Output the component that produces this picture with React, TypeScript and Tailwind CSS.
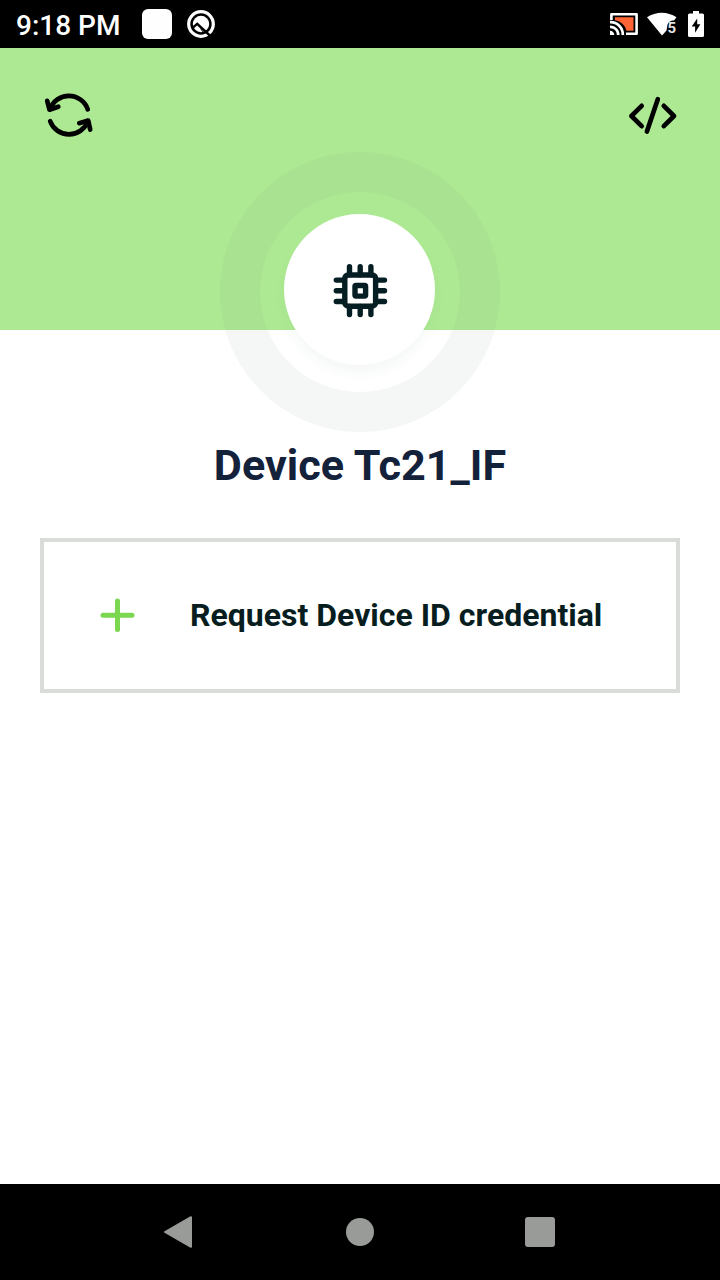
import React from "react";

function StatusBar() {
  return (
    <header className="flex h-12 shrink-0 items-center justify-between bg-black pl-4 pr-[15px] text-white">
      <div className="flex items-center">
        <span className="w-[126px] whitespace-nowrap pt-[3px] text-[28px] font-medium leading-8">9:18 PM</span>
        <span className="size-[30px] rounded-[6px] bg-[#fdfefd]" />
        <svg className="ml-[14px] size-[30px]" viewBox="0 0 30 30" fill="none">
          <circle cx="15" cy="15" r="12.3" stroke="#fff" strokeWidth="3.2" />
          <circle cx="15" cy="15" r="8.2" fill="#fff" />
          <path d="M6.500 18.800l4.700-3.900L26 28.500" stroke="#000" strokeWidth="2.4" />
          <path d="M14.500 19.500l3 4" stroke="#000" strokeWidth="1" />
        </svg>
      </div>
      <div className="flex items-center">
        <svg className="h-[24px] w-[30px]" viewBox="0 0 30 24" fill="none">
          <path d="M2.400 8V2.300h25.200v19.400H17" stroke="#fff" strokeWidth="2.600" strokeLinejoin="round" />
          <path d="M6 5.200h18.500v13.600h-7C16 13 12 9 6 8.200z" fill="#ff6434" />
          <path d="M1 10.200A12.300 12.300 0 0 1 13.800 23M1 15a7.600 7.600 0 0 1 8.200 8" stroke="#fff" strokeWidth="2.700" />
          <path d="M1 18.800a4.300 4.300 0 0 1 4.300 4.300H1z" fill="#fff" />
        </svg>
        <div className="relative ml-[8px] h-[24px] w-[32px]">
          <svg className="size-full" viewBox="0 0 32 24">
            <path d="M0 5.300C9-.9 20.500-.9 29.500 5.300L27 8.500C23.500 8.500 20.500 10.500 20.300 14L19.500 18.500l-4.500 5z" fill="#fff" />
          </svg>
          <span className="absolute left-[20.500px] top-[8px] text-[15px] font-bold leading-[16px] text-[#e4e4e4]">5</span>
        </div>
        <svg className="ml-[8px] h-[26px] w-[18px]" viewBox="0 0 18 26">
          <path d="M6 0h6v2.500h3.500a1.500 1.500 0 0 1 1.500 1.500v20.500a1.500 1.500 0 0 1-1.500 1.500h-13A1.500 1.500 0 0 1 1 24.500V4a1.500 1.500 0 0 1 1.500-1.500H6z" fill="#fff" />
          <path d="M10.200 7.500L4.700 15.600h3.400v6.200l5.300-8.600h-3.200z" fill="#000" />
        </svg>
      </div>
    </header>
  );
}

function DeviceBadge() {
  return (
    <div className="absolute left-[220px] top-[104px] size-[280px] rounded-full border-[40px] border-[#829687]/8">
      <div className="ml-[24.400px] mt-[22px] flex size-[151px] items-center justify-center rounded-full bg-[#fefffe] shadow-[0_8px_14px_-2px_rgba(50,70,100,0.05)]">
        <svg className="size-[80px]" viewBox="0 0 80 80" fill="none" stroke="#051e23" strokeWidth="5.400" strokeLinecap="round">
          <rect x="24.800" y="25" width="30.800" height="31.200" rx="3.500" />
          <rect x="35" y="35.500" width="10.600" height="10.600" rx="1" />
          <path d="M29.500 16.700v8M40.200 16.700v8M50.900 16.700v8M29.500 56.500v8M40.200 56.500v8M50.900 56.500v8M16.300 30.100h8M16.300 40.800h8M16.300 51.500h8M56.500 30.100h8M56.500 40.800h8M56.500 51.500h8" />
        </svg>
      </div>
    </div>
  );
}

export default function App() {
  return (
    <div className="flex h-[1280px] w-[720px] flex-col overflow-hidden bg-[#fefffe] font-['Roboto',sans-serif]">
      <StatusBar />
      <section className="relative h-[282px] shrink-0 bg-[#ade992]">
        <div className="flex justify-between pl-[30px] pr-[25px] pt-8 text-black">
          <button aria-label="Refresh">
            <svg className="h-[70px] w-[80px]" viewBox="0 0 80 70" fill="none" stroke="currentColor" strokeWidth="4.700" strokeLinecap="round" strokeLinejoin="round">
              <path d="M20 29.200A20 20 0 0 1 57.800 29.400M20.200 41.200a20 20 0 0 0 37.600 0" />
              <path d="M17.200 20.800l2.300 8.900 8.800-3M49.200 43.200l9-2.600 2 9" />
            </svg>
          </button>
          <button aria-label="Source">
            <svg className="h-[70px] w-[80px]" viewBox="0 0 80 70" fill="none" stroke="currentColor" strokeWidth="4.700" strokeLinecap="round" strokeLinejoin="round">
              <path d="M26.700 25.800L16.400 36l10.300 10.200M42.800 19.200L31.900 51.500M48.800 25.800L59 36 48.800 46.200" />
            </svg>
          </button>
        </div>
        <DeviceBadge />
      </section>
      <main className="flex grow flex-col px-10 pt-[111px]">
        <h1 className="text-center text-[43.200px] font-bold leading-[50px] text-[#14213a]">Device Tc21_IF</h1>
        <button className="mt-[47px] flex h-[155px] w-full items-center border-4 border-[#dadcda] pl-[56px]">
          <svg className="size-[35px]" viewBox="0 0 35 35" fill="none" stroke="#7bd650" strokeWidth="5" strokeLinecap="round">
            <path d="M17.500 3v28.500M3 17.200h29" />
          </svg>
          <span className="ml-[55px] whitespace-nowrap pb-[2px] text-[32px] font-bold leading-10 text-[#071d20]">Request Device ID credential</span>
        </button>
      </main>
      <nav className="grid h-24 shrink-0 grid-cols-3 place-items-center bg-black px-[90px]">
        <svg className="mr-[4px] size-[32px]" viewBox="0 0 32 32">
          <path d="M3 16L29 1.200v29.600z" fill="#999b98" stroke="#999b98" strokeWidth="2" strokeLinejoin="round" />
        </svg>
        <span className="size-[28px] rounded-full bg-[#999b98]" />
        <span className="size-[30px] rounded-[3px] bg-[#999b98]" />
      </nav>
    </div>
  );
}
